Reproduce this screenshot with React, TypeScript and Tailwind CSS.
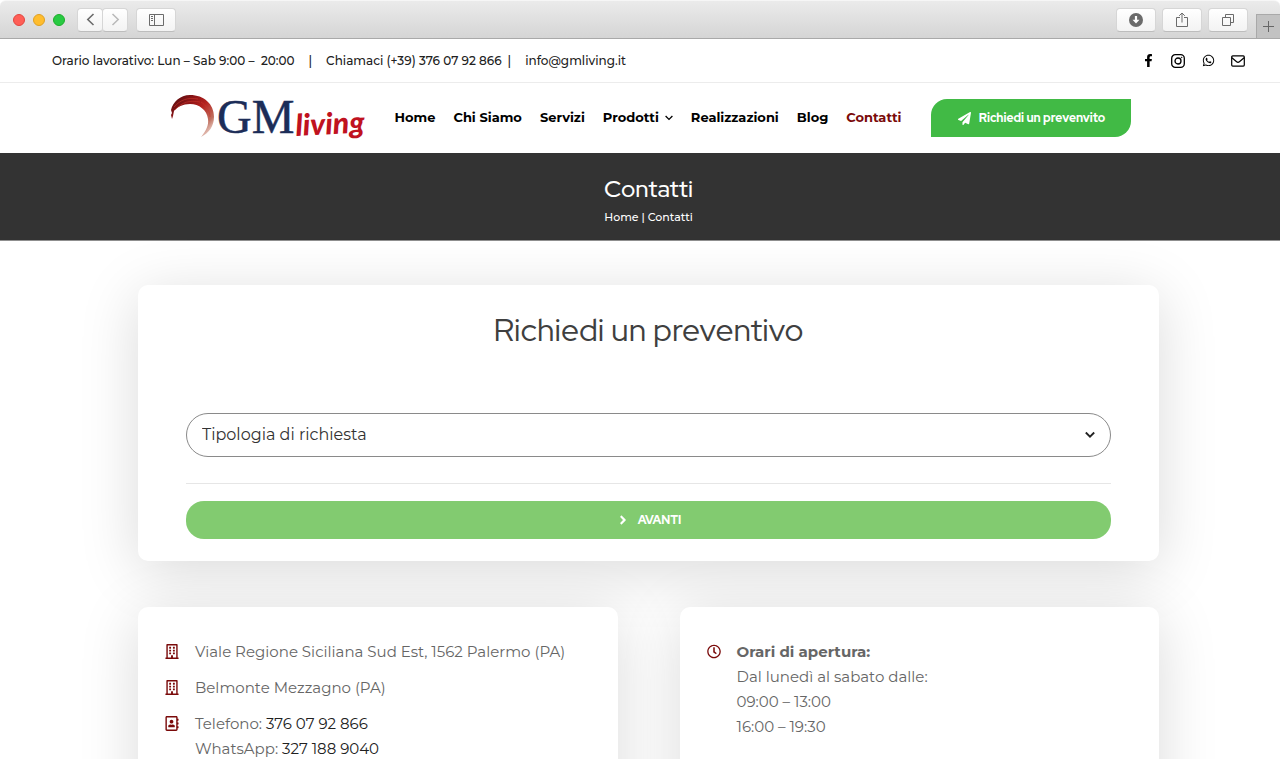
import React from 'react';
import {
  FaAngleRight,
  FaFacebookF,
  FaPaperPlane,
  FaRegAddressBook,
  FaRegBuilding,
  FaRegClock,
  FaWhatsapp,
} from 'react-icons/fa';

interface NavItem {
  label: string;
  hasMenu?: boolean;
  active?: boolean;
}

const navItems: NavItem[] = [
  { label: 'Home' },
  { label: 'Chi Siamo' },
  { label: 'Servizi' },
  { label: 'Prodotti', hasMenu: true },
  { label: 'Realizzazioni' },
  { label: 'Blog' },
  { label: 'Contatti', active: true },
];

const ToolbarButton: React.FC<{ label: string; className: string; children: React.ReactNode }> = ({
  label,
  className,
  children,
}) => (
  <button
    type="button"
    aria-label={label}
    className={`flex h-6 items-center justify-center border border-[#d6d6d6] border-b-[#bdbdbd] bg-linear-to-b from-white to-[#f3f3f3] text-[#6b6b6b] ${className}`}
  >
    {children}
  </button>
);

const BrowserBar: React.FC = () => (
  <div className="flex h-[39px] shrink-0 items-center rounded-t-md border-t border-b border-t-[#f6f6f6] border-b-[#a9a9a9] bg-linear-to-b from-[#ebebeb] to-[#d5d5d5] pl-[13px]">
    <div className="flex gap-2">
      <span className="size-3 rounded-full border border-[#e2463f] bg-[#ff5f57]" />
      <span className="size-3 rounded-full border border-[#dfa023] bg-[#ffbd2e]" />
      <span className="size-3 rounded-full border border-[#1dad2b] bg-[#28ca42]" />
    </div>
    <div className="ml-3 flex">
      <ToolbarButton label="Indietro" className="w-[26px] rounded-sm">
        <svg width="9" height="13" viewBox="0 0 9 13" fill="none" stroke="currentColor" strokeWidth="1.6">
          <path d="M7.5 1 1.8 6.5l5.7 5.5" />
        </svg>
      </ToolbarButton>
      <ToolbarButton label="Avanti" className="-ml-px w-[26px] rounded-sm">
        <svg width="9" height="13" viewBox="0 0 9 13" fill="none" stroke="#b9b9b9" strokeWidth="1.5">
          <path d="m1.5 1 5.7 5.5L1.5 12" />
        </svg>
      </ToolbarButton>
    </div>
    <ToolbarButton label="Barra laterale" className="ml-2 w-10 rounded-sm">
      <svg width="15" height="12" viewBox="0 0 15 12" fill="none" stroke="currentColor">
        <path d="M.5.5h14v11H.5zM5.5.5v11M2 2.5h2M2 4.5h2M2 6.5h2" />
      </svg>
    </ToolbarButton>
    <div className="ml-auto flex gap-[6px]">
      <ToolbarButton label="Download" className="w-10 rounded-sm">
        <svg width="14" height="14" viewBox="0 0 14 14">
          <circle cx="7" cy="7" r="7" fill="currentColor" />
          <path d="M5.9 3h2.2v3.8h2.4L7 10.6 3.5 6.8h2.4z" fill="#fff" />
        </svg>
      </ToolbarButton>
      <ToolbarButton label="Condividi" className="w-10 rounded-sm">
        <svg width="12" height="16" viewBox="0 0 12 16" fill="none" stroke="currentColor">
          <path d="M4 5.5H.5v9h11v-9H8M6 10.5V1M3.2 3.8 6 1l2.8 2.8" />
        </svg>
      </ToolbarButton>
      <ToolbarButton label="Schede" className="w-10 rounded-sm">
        <svg width="12" height="12" viewBox="0 0 12 12" fill="none" stroke="currentColor">
          <path d="M.5 3.5h8v8h-8zM3.5 3.5v-3h8v8h-3" />
        </svg>
      </ToolbarButton>
    </div>
    <button
      type="button"
      aria-label="Nuova scheda"
      className="ml-2 flex h-6 w-6 items-center justify-center self-end border-t border-l border-[#a9a9a9] bg-[#c2c2c2] text-[#666]"
    >
      <svg width="11" height="11" viewBox="0 0 11 11" stroke="currentColor">
        <path d="M5.5 0v11M0 5.5h11" />
      </svg>
    </button>
  </div>
);

const TopBar: React.FC = () => (
  <div className="flex h-11 items-center justify-between border-b border-[#ececec] pr-[35px] pl-[52px] text-xs font-medium text-[#212121]">
    <div className="flex items-center">
      <span>Orario lavorativo: Lun – Sab 9:00 –&nbsp; 20:00</span>
      <span className="mx-3.5">|</span>
      <a href="tel:+393760792866">Chiamaci (+39) 376 07 92 866</a>
      <span className="mr-3.5 ml-1.5">|</span>
      <a href="mailto:info@gmliving.it">info@gmliving.it</a>
    </div>
    <div className="flex items-center gap-4 text-black">
      <a href="#facebook" aria-label="Facebook" className="flex w-3.5 justify-center">
        <FaFacebookF size={13} />
      </a>
      <a href="#instagram" aria-label="Instagram" className="flex w-3.5 justify-center">
        <svg width="14" height="14" viewBox="0 0 14 14" fill="none" stroke="currentColor" strokeWidth="1.3">
          <rect x=".7" y=".7" width="12.6" height="12.6" rx="3.6" />
          <circle cx="7" cy="7" r="3" />
          <circle cx="10.7" cy="3.4" r=".5" fill="currentColor" strokeWidth=".4" />
        </svg>
      </a>
      <a href="#whatsapp" aria-label="WhatsApp" className="flex w-3.5 justify-center">
        <FaWhatsapp size={13} />
      </a>
      <a href="#email" aria-label="Email" className="flex w-3.5 justify-center">
        <svg width="14" height="12" viewBox="0 0 14 12" fill="none" stroke="currentColor" strokeWidth="1.2">
          <rect x=".7" y=".9" width="12.6" height="10.2" rx="1" />
          <path d="m.9 2.8 4.7 4a2.2 2.2 0 0 0 2.8 0l4.7-4" />
        </svg>
      </a>
    </div>
  </div>
);

const Logo: React.FC = () => (
  <svg width="196" height="66" viewBox="0 -8 196 66" role="img" aria-label="GM living">
    <defs>
      <linearGradient id="swoosh" x1="0" y1="0" x2="1" y2="1">
        <stop offset="0" stopColor="#4d0c0e" />
        <stop offset=".3" stopColor="#8f1517" />
        <stop offset=".5" stopColor="#b5231f" />
        <stop offset=".75" stopColor="#c0705f" />
        <stop offset="1" stopColor="#ecd3c6" stopOpacity=".4" />
      </linearGradient>
    </defs>
    <path
      d="M1 26 0 22l1-2-1-3C2 9 9 2 19 2c14 0 24 9 24 22 0 9-5 16-13 20 5-6 8-12 7-18C36 17 28 11 19 11 12 11 6 14 3 18l-1 5z"
      fill="url(#swoosh)"
    />
    <path
      d="M3 14C9 7 17 4 27 6M4 17C11 9 19 7 29 9M30 9c5 3 9 9 9 15"
      fill="none"
      stroke="#c8352c"
      strokeWidth=".6"
    />
    <text x="46" y="40" fill="#1c2d58" stroke="#1c2d58" strokeWidth=".5" fontSize="48" className="font-['Liberation_Serif',serif]">
      GM
    </text>
    <text
      x="125"
      y="43"
      fill="#c0121f"
      fontSize="30"
      fontWeight="900"
      fontStyle="italic"
      transform="rotate(-3 125 43)"
      className="font-['Lato',sans-serif]"
    >
      living
    </text>
  </svg>
);

const Header: React.FC = () => (
  <header className="flex h-[70px] items-center justify-center pl-[22px]">
    <a href="#home" className="mr-7 shrink-0">
      <Logo />
    </a>
    <nav className="flex items-center gap-[18px] text-[13px] font-bold whitespace-nowrap text-black">
      {navItems.map((item) => (
        <a
          key={item.label}
          href={`#${item.label}`}
          className={`flex items-center gap-1.5 ${item.active ? 'text-[#7a0a0a]' : ''}`}
        >
          {item.label}
          {item.hasMenu && (
            <svg width="8" height="6" viewBox="0 0 8 6" fill="none" stroke="currentColor" strokeWidth="1.3">
              <path d="m.6 1 3.4 3.4L7.4 1" />
            </svg>
          )}
        </a>
      ))}
    </nav>
    <button
      type="button"
      className="ml-[30px] flex h-[38px] w-[200px] shrink-0 items-center justify-center gap-2 rounded-tl-2xl rounded-br-2xl bg-[#41ba45] font-['Red_Hat_Display','Lato',sans-serif] text-xs font-extrabold text-white"
    >
      <FaPaperPlane size={13} />
      Richiedi un prevenvito
    </button>
  </header>
);

const InfoRow: React.FC<{ icon: React.ReactNode; children: React.ReactNode }> = ({ icon, children }) => (
  <li className="flex gap-4">
    <span className="flex h-[25px] w-3.5 shrink-0 items-center justify-center text-[#7a0a0a]">{icon}</span>
    <div>{children}</div>
  </li>
);

const cardClass = 'rounded-[10px] bg-white shadow-[0_10px_60px_rgba(0,0,0,0.15)]';

const App: React.FC = () => (
  <div className="flex h-screen flex-col overflow-hidden bg-white font-['Montserrat','Inter',sans-serif]">
    <BrowserBar />
    <div className="flex-1 overflow-hidden">
      <TopBar />
      <Header />

      <section className="flex h-[88px] flex-col items-center justify-center border-b border-[#8f8f8f] bg-[#333] pt-1.5 pl-[17px] text-white">
        <h1 className="font-['Red_Hat_Display','Lato',sans-serif] text-2xl font-medium">Contatti</h1>
        <p className="mt-0.5 text-[11px] leading-5 font-medium">
          <a href="#home">Home</a> | <span>Contatti</span>
        </p>
      </section>

      <main className="pt-11 pr-[121px] pl-[138px]">
        <section className={`px-12 pt-6 pb-[22px] ${cardClass}`}>
          <h2 className="text-center font-['Red_Hat_Display','Lato',sans-serif] text-[32px] leading-[42px] text-[#3f3f3f]">
            Richiedi un preventivo
          </h2>
          <form className="mt-[62px]">
            <div className="relative">
              <select
                aria-label="Tipologia di richiesta"
                className="block h-11 w-full appearance-none rounded-full border border-[#8a8a8a] bg-white px-[15px] text-base text-[#333]"
              >
                <option>Tipologia di richiesta</option>
              </select>
              <svg
                className="pointer-events-none absolute top-1/2 right-4 -translate-y-1/2"
                width="10"
                height="7"
                viewBox="0 0 10 7"
                fill="none"
                stroke="#222"
                strokeWidth="1.8"
              >
                <path d="m.8 1 4.2 4.2L9.2 1" />
              </svg>
            </div>
            <hr className="mt-[26px] border-[#e6e6e6]" />
            <button
              type="button"
              className="mt-[17px] flex h-[38px] w-full items-center justify-center gap-2 rounded-[18px] bg-[#82cb70] font-['Red_Hat_Display','Open_Sans',sans-serif] text-xs font-extrabold text-white"
            >
              <FaAngleRight size={14} />
              AVANTI
            </button>
          </form>
        </section>

        <div className="mt-[46px] grid grid-cols-2 gap-[62px] text-[15px] leading-[25px] text-[#666]">
          <section className={`min-h-[260px] px-[27px] py-8 ${cardClass}`}>
            <ul className="flex flex-col gap-[11px]">
              <InfoRow icon={<FaRegBuilding size={15} />}>Viale Regione Siciliana Sud Est, 1562 Palermo (PA)</InfoRow>
              <InfoRow icon={<FaRegBuilding size={15} />}>Belmonte Mezzagno (PA)</InfoRow>
              <InfoRow icon={<FaRegAddressBook size={15} />}>
                <p>
                  Telefono: <a href="tel:3760792866" className="text-[#212121]">376 07 92 866</a>
                </p>
                <p>
                  WhatsApp: <a href="tel:3271889040" className="text-[#212121]">327 188 9040</a>
                </p>
              </InfoRow>
            </ul>
          </section>
          <section className={`min-h-[260px] px-[27px] py-8 ${cardClass}`}>
            <ul>
              <InfoRow icon={<FaRegClock size={15} />}>
                <p className="font-bold">Orari di apertura:</p>
                <p>Dal lunedì al sabato dalle:</p>
                <p>09:00 – 13:00</p>
                <p>16:00 – 19:30</p>
              </InfoRow>
            </ul>
          </section>
        </div>
      </main>
    </div>
  </div>
);

export default App;
